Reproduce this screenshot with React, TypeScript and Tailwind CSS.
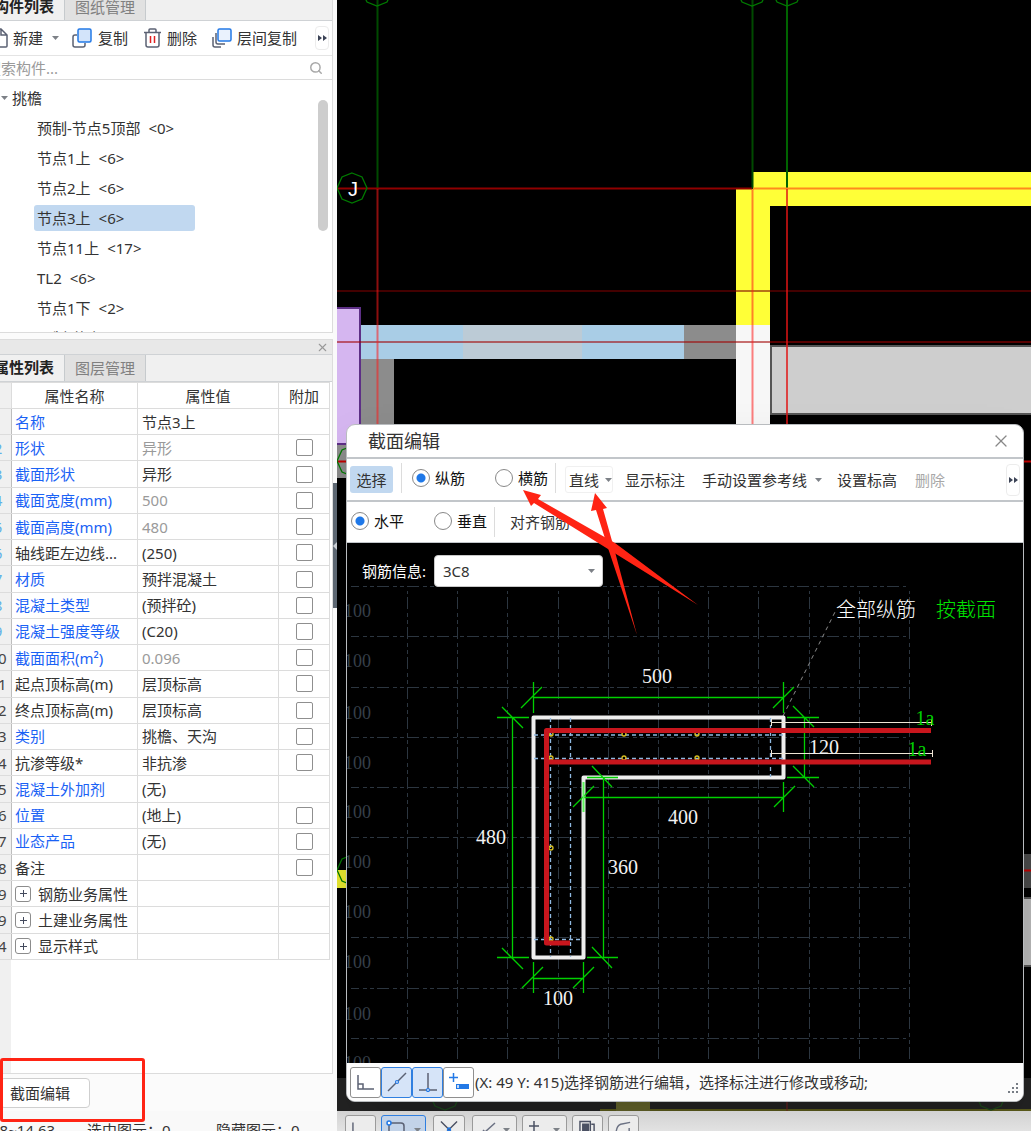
import React from 'react';
import { Search, X } from 'lucide-react';

type Property = {
  no: number;
  name: string;
  value?: string;
  blue?: boolean;
  muted?: boolean;
  check?: boolean;
  group?: boolean;
};

const treeItems = [
  { name: '预制-节点5顶部', count: '<0>' },
  { name: '节点1上', count: '<6>' },
  { name: '节点2上', count: '<6>' },
  { name: '节点3上', count: '<6>', selected: true },
  { name: '节点11上', count: '<17>' },
  { name: 'TL2', count: '<6>' },
  { name: '节点1下', count: '<2>' },
  { name: '预制-节点2下', count: '' },
];

const properties: Property[] = [
  { no: 1, name: '名称', value: '节点3上', blue: true },
  { no: 2, name: '形状', value: '异形', blue: true, muted: true, check: true },
  { no: 3, name: '截面形状', value: '异形', blue: true, check: true },
  { no: 4, name: '截面宽度(mm)', value: '500', blue: true, muted: true, check: true },
  { no: 5, name: '截面高度(mm)', value: '480', blue: true, muted: true, check: true },
  { no: 6, name: '轴线距左边线...', value: '(250)', check: true },
  { no: 7, name: '材质', value: '预拌混凝土', blue: true, check: true },
  { no: 8, name: '混凝土类型', value: '(预拌砼)', blue: true, check: true },
  { no: 9, name: '混凝土强度等级', value: '(C20)', blue: true, check: true },
  { no: 10, name: '截面面积(m²)', value: '0.096', blue: true, muted: true, check: true },
  { no: 11, name: '起点顶标高(m)', value: '层顶标高', check: true },
  { no: 12, name: '终点顶标高(m)', value: '层顶标高', check: true },
  { no: 13, name: '类别', value: '挑檐、天沟', blue: true, check: true },
  { no: 14, name: '抗渗等级*', value: '非抗渗', check: true },
  { no: 15, name: '混凝土外加剂', value: '(无)', blue: true },
  { no: 16, name: '位置', value: '(地上)', blue: true, check: true },
  { no: 17, name: '业态产品', value: '(无)', blue: true, check: true },
  { no: 18, name: '备注', check: true },
  { no: 19, name: '钢筋业务属性', group: true },
  { no: 29, name: '土建业务属性', group: true },
  { no: 34, name: '显示样式', group: true },
];

const Caret: React.FC<{ className?: string }> = ({ className = '' }) => (
  <svg width="7" height="4" viewBox="0 0 7 4" className={`shrink-0 fill-[#7d8187] ${className}`}>
    <path d="M0 0h7L3.5 4z" />
  </svg>
);

const MoreArrows = () => (
  <svg width="9" height="6" viewBox="0 0 9 6" className="shrink-0 fill-[#3c4356]">
    <path d="M0 0l4 3-4 3zM5 0l4 3-4 3z" />
  </svg>
);

const Tabs: React.FC<{ active: string; other: string; className: string }> = ({ active, other, className }) => (
  <div className={`flex items-end overflow-hidden border-b border-[#cfd2d5] bg-[#f0f0f0] ${className}`} role="tablist">
    <button role="tab" aria-selected="true" className="h-7 w-20 shrink-0 text-center font-bold text-[#222]">
      {active}
    </button>
    <button
      role="tab"
      aria-selected="false"
      className="h-7 w-[82px] shrink-0 border-x border-t border-[#c6cacd] bg-[#e1e1e1] text-center text-[#808080]"
    >
      {other}
    </button>
  </div>
);

const ComponentPanel = () => (
  <section className="flex h-[333px] shrink-0 flex-col border-r border-b border-[#dcdcdc] bg-white">
    <Tabs active="构件列表" other="图纸管理" className="h-[21px] shrink-0" />

    <div className="flex h-[35px] shrink-0 items-center border-b border-[#e4e4e4] pr-[3px] pl-2">
      <button className="flex items-center gap-[5px]">
        <svg width="16" height="20" viewBox="0 0 16 20" fill="none" stroke="#5b6173" strokeWidth="1.5">
          <path d="M2 1h7l6 6v11a1 1 0 0 1-1 1H2a1 1 0 0 1-1-1V2a1 1 0 0 1 1-1zM9 1v6h6" />
        </svg>
        新建
      </button>
      <Caret className="ml-[9px]" />
      <button className="ml-[13px] flex items-center gap-[6px]">
        <svg width="20" height="20" viewBox="0 0 20 20" fill="none" strokeWidth="1.5">
          <path d="M5 7H3a2 2 0 0 0-2 2v8a2 2 0 0 0 2 2h8a2 2 0 0 0 2-2v-2" stroke="#5b6173" />
          <rect x="6" y="1" width="13" height="13" rx="1.5" fill="#d3e4fa" stroke="#2379e6" />
        </svg>
        复制
      </button>
      <button className="ml-4 flex items-center gap-[6px]">
        <svg width="17" height="20" viewBox="0 0 17 20" fill="none" stroke="#5b6173" strokeWidth="1.5">
          <path d="M0 4.5h17M5 4V2a1 1 0 0 1 1-1h5a1 1 0 0 1 1 1v2M2 5v12a2 2 0 0 0 2 2h9a2 2 0 0 0 2-2V5" />
          <path d="M6.5 8v7M10.5 8v7" stroke="#e02020" />
        </svg>
        删除
      </button>
      <button className="ml-[15px] flex items-center gap-[5px]">
        <svg width="20" height="20" viewBox="0 0 20 20" fill="none" strokeWidth="1.5">
          <path d="M1 9v8a2 2 0 0 0 2 2h6M4 5v9a2 2 0 0 0 2 2h7" stroke="#5b6173" />
          <rect x="6" y="1" width="13" height="12" rx="1.5" fill="#eaf2fd" stroke="#2379e6" />
        </svg>
        层间复制
      </button>
      <button
        aria-label="更多"
        className="ml-auto flex h-6 w-[14px] items-center justify-center rounded border border-[#ececec]"
      >
        <MoreArrows />
      </button>
    </div>

    <label className="flex h-6 shrink-0 items-center border-b border-[#dcdcdc] pr-[9px] pl-[2px]">
      <input
        type="text"
        aria-label="搜索构件"
        placeholder="搜索构件..."
        className="min-w-0 flex-1 leading-5 outline-none placeholder:text-[#9a9a9a]"
      />
      <Search size={14} strokeWidth={2.5} className="text-[#a8a8a8]" />
    </label>

    <div className="flex min-h-0 flex-1 overflow-hidden pt-[3px]">
      <div className="min-w-0 flex-1 pl-4">
        <div className="flex h-[30px] items-center gap-1 pl-[1px]">
          <Caret />
          挑檐
        </div>
        <ul className="pl-[34px]">
          {treeItems.map((item) => (
            <li key={item.name} className="flex h-[30px] items-center">
              <button
                className={`flex h-[26px] w-[161px] items-center gap-2 rounded-[3px] pl-[3px] ${
                  item.selected ? 'bg-[#c1d8f0]' : ''
                }`}
              >
                <span>{item.name}</span>
                <span>{item.count}</span>
              </button>
            </li>
          ))}
        </ul>
      </div>
      <div className="mt-[17px] mr-1 h-[131px] w-[10px] rounded-full bg-[#cdcdcd]"></div>
    </div>
  </section>
);

const PropertyTable = () => (
  <table className="h-[578px] w-[346px] table-fixed border-collapse">
    <colgroup>
      <col className="w-[27px]" />
      <col className="w-[126px]" />
      <col className="w-[141px]" />
      <col />
    </colgroup>
    <thead>
      <tr className="h-[26px]">
        <th className="border border-[#dcdcdc] bg-[#f0f0f0]"></th>
        <th className="border border-[#dcdcdc] p-0 font-normal">属性名称</th>
        <th className="border border-[#dcdcdc] p-0 font-normal">属性值</th>
        <th className="border border-[#dcdcdc] p-0 font-normal">附加</th>
      </tr>
    </thead>
    <tbody>
      {properties.map((p) => (
        <tr key={p.no}>
          <td
            className={`border border-[#dcdcdc] border-r-[#bdbdbd] bg-[#f0f0f0] p-0 text-center ${
              p.no < 10 ? 'text-[#5fb0e8]' : 'text-[#444]'
            }`}
          >
            {p.no}
          </td>
          <td className={`border border-[#dcdcdc] py-0 pr-0 pl-[3px] whitespace-nowrap ${p.blue ? 'text-[#1a62f5]' : ''}`}>
            {p.group ? (
              <div className="flex items-center gap-[7px]">
                <button
                  aria-label={`展开${p.name}`}
                  className="flex size-4 items-center justify-center rounded-[3px] border border-[#8c8c8c]"
                >
                  <svg width="7" height="7" viewBox="0 0 7 7" stroke="#444b5e">
                    <path d="M0 3.5h7M3.5 0v7" />
                  </svg>
                </button>
                {p.name}
              </div>
            ) : (
              p.name
            )}
          </td>
          <td className={`border border-[#dcdcdc] py-0 pr-0 pl-1 ${p.muted ? 'text-[#9a9a9a]' : ''}`}>{p.value}</td>
          <td className="border border-[#dcdcdc] p-0">
            {p.check && (
              <input
                type="checkbox"
                aria-label={`附加 ${p.name}`}
                className="mx-auto block size-[17px] appearance-none rounded-[2px] border border-[#8f8f8f] bg-white"
              />
            )}
          </td>
        </tr>
      ))}
    </tbody>
  </table>
);

const PropertyPanel = () => (
  <section className="mt-[6px] flex min-h-0 flex-1 flex-col">
    <div className="flex min-h-0 flex-1 flex-col border-y border-r border-[#dcdcdc] bg-white">
      <div className="flex h-[14px] shrink-0 items-center justify-end bg-[#e8e8e8] pr-[3px]">
        <button aria-label="关闭">
          <X size={13} strokeWidth={2} className="text-[#999]" />
        </button>
      </div>
      <Tabs active="属性列表" other="图层管理" className="h-[28px] shrink-0 border-t" />
      <PropertyTable />
      <div className="w-[27px] flex-1 bg-[#f0f0f0]"></div>
    </div>
    <div className="flex h-[37px] shrink-0 items-center pl-4">
      <button className="h-[30px] w-[90px] rounded border border-[#cfcfcf] bg-white pr-[10px] text-center">
        截面编辑
      </button>
    </div>
  </section>
);

// axis bubble: a polygon round the axis name
const Bubble: React.FC<{ x: number; y: number; stroke?: string }> = ({ x, y, stroke = '#007a00' }) => (
  <path
    d={`M${x} ${y - 15}l10 4 5 11-5 11-10 4-10-4-5-11 5-11z`}
    fill="none"
    stroke={stroke}
    strokeWidth="1.3"
  />
);

const PlanDrawing = () => (
  <svg className="block h-full w-full">
    <g transform="translate(-337 0)">
      <rect x="753" y="172" width="1200" height="34" fill="#ffff37" />
      <rect x="736" y="189" width="34" height="137" fill="#ffff37" />
      <rect x="736" y="325" width="34" height="110" fill="#f7f7f7" />
      <rect x="771" y="346" width="1200" height="68" fill="#cecece" stroke="#555" strokeWidth="2" />
      <rect x="360" y="325" width="103" height="34" fill="#a9cde6" />
      <rect x="463" y="325" width="119" height="34" fill="#bccbd6" />
      <rect x="582" y="325" width="102" height="34" fill="#a9cde6" />
      <rect x="684" y="325" width="52" height="34" fill="#8c8c8c" />
      <rect x="360" y="359" width="34" height="119" fill="#8c8c8c" />
      <rect x="330" y="308" width="30" height="136" fill="#d5b6f0" stroke="#5d2f86" strokeWidth="2" />
      <rect x="330" y="445" width="64" height="33" fill="#8c8c8c" />
      <rect x="330" y="870" width="64" height="18" fill="#ecec30" />
      <rect x="1020" y="854" width="400" height="34" fill="#4a4a4a" />
      <rect x="1020" y="898" width="400" height="68" fill="#b9b9b9" stroke="#555" strokeWidth="2" />
      <rect x="330" y="1078" width="2000" height="60" fill="#232323" />
      <rect x="600" y="1109" width="2000" height="2" fill="#5c5c1c" />
      <rect x="616" y="1101" width="34" height="10" fill="#66662c" />

      <g strokeWidth="2" fill="none">
        <path d="M377.500 0V189M752.500 0V189" stroke="#004a00" />
        <path d="M787 0V189" stroke="#006400" />
        <path d="M337 188.500H752" stroke="#900000" />
        <path d="M753 188.500H2000" stroke="#ff8a1c" />
        <path d="M337 291H2000" stroke="#7a0000" strokeOpacity=".55" />
        <path d="M337 342H2000" stroke="#a00000" strokeOpacity=".55" />
        <path d="M377.500 189V440M752.500 189V440" stroke="#ff1a1a" strokeOpacity=".55" />
        <path d="M787 189V440" stroke="#e01414" strokeWidth="1.500" />
        <path d="M337 461.500H2000M1020 870.500H2000" stroke="#c00000" />
        <path d="M787 1101V1111" stroke="#7a2020" strokeWidth="1" />
      </g>

      <Bubble x={377} y={-9} />
      <Bubble x={752} y={-9} />
      <Bubble x={787} y={-9} />
      <Bubble x={352} y={188} />
      <Bubble x={352} y={461} />
      <Bubble x={352} y={870} />
      <Bubble x={445} y={1095} stroke="#1c4a1c" />
      <Bubble x={991} y={1095} stroke="#1c4a1c" />
      <text x="353" y="196" textAnchor="middle" fontSize="20" fill="#fff" className="font-['Liberation_Sans',sans-serif]">
        J
      </text>
    </g>
  </svg>
);

const gridX = [407, 457, 507, 558, 608, 658, 708, 758, 809, 859, 909];
const gridY = [586, 636, 687, 737, 787, 837, 887, 937, 988, 1038];
const scaleY = [617, 667, 719, 769, 818, 868, 918, 968, 1020, 1069];
const barDots = [
  [551, 734],
  [624, 734],
  [697, 734],
  [551, 758],
  [624, 758],
  [697, 758],
  [551, 848],
  [551, 939],
];

const SectionDrawing = () => (
  <svg className="absolute inset-0 h-full w-full">
    <g transform="translate(-347 -543)" fill="none">
      <g stroke="#2c3640" strokeDasharray="12 4 4 3 4 3" shapeRendering="crispEdges">
        {gridX.map((x) => (
          <path key={x} d={`M${x}.5 591V1059`} strokeDashoffset="24" />
        ))}
        {gridY.map((y) => (
          <path key={y} d={`M351 ${y}.5H906`} strokeDashoffset="4" />
        ))}
      </g>
      <g fill="#363f49" fontSize="18" textAnchor="end" className="font-['Liberation_Serif',serif]">
        {scaleY.map((y) => (
          <text key={y} x="371" y={y}>
            100
          </text>
        ))}
      </g>

      <path d="M783 716L835 612" stroke="#8a8a8a" strokeDasharray="4 4" />

      <path d="M533.500 717.500H783.500V777.500H583.500V957.500H533.500Z" stroke="#eeeeee" strokeWidth="4" strokeLinejoin="round" />
      <path
        d="M550.500 718V957M570.500 718V957M770.500 718V777M534 735H783M534 758.500H783M534 939.500H583"
        stroke="#8fb8e0"
        strokeWidth="1.300"
        strokeDasharray="4 3"
      />
      {barDots.map(([x, y]) => (
        <circle key={`${x}-${y}`} cx={x} cy={y} r="2" stroke="#d8c020" strokeWidth="1.300" />
      ))}

      <g stroke="#00d000" strokeWidth="1.300">
        <path d="M533 697.500H783M533.500 682V713M783.500 682V713M521 708L542 687M773 708L794 687" />
        <path d="M512.500 717V957M497 717.500H529M497 957.500H529M502 707L523 728M502 948L523 969" />
        <path d="M533 978.500H583M533.500 962V993M583.500 962V993M522 988L543 967M573 988L594 967" />
        <path d="M603.500 777V957M587 777.500H618M587 957.500H618M592 766L612 787M592 947L612 968" />
        <path d="M583 797.500H783M783.500 782V812M573 807L594 786M774 807L795 786" />
        <path d="M804.500 717V777M787 717.500H819M787 777.500H819M793 706L814 727M793 766L814 787" />
      </g>
      <path d="M583.500 782V812" stroke="#5cf55c" strokeWidth="2" />
      <path d="M771 722.500H932M771.500 719V726M931.500 719V726M771 753.500H933M771.500 750V757M932.500 750V757" stroke="#efe6d6" />

      <g fill="#f2f2f2" fontSize="20" textAnchor="middle" className="font-['Liberation_Serif',serif]">
        <text x="657" y="683">500</text>
        <text x="491" y="844">480</text>
        <text x="683" y="824">400</text>
        <text x="623" y="874">360</text>
        <text x="558" y="1005">100</text>
        <text x="824" y="754">120</text>
        <text x="925" y="725" fill="#00d000">1a</text>
        <text x="917" y="756" fill="#00d000">1a</text>
      </g>

      <g stroke="#c8161d" strokeWidth="5" strokeLinejoin="round">
        <path d="M931 730.500H546.500V943H570M546.500 762H931" />
      </g>

      <g fontSize="20" fontWeight="300">
        <text x="836" y="617" fill="#fff">全部纵筋</text>
        <text x="936" y="617" fill="#00e400">按截面</text>
      </g>
    </g>
  </svg>
);

const Radio: React.FC<{ name: string; label: string; checked?: boolean }> = ({ name, label, checked }) => (
  <label className="flex items-center gap-[5px] text-[#111]">
    <input
      type="radio"
      name={name}
      defaultChecked={checked}
      className="size-[18px] appearance-none rounded-full border border-[#888] bg-white bg-[radial-gradient(circle,#1f78e8_0_4px,transparent_5px)] bg-no-repeat not-checked:bg-none"
    />
    {label}
  </label>
);

const Divider = () => <div className="h-[30px] w-px shrink-0 bg-[#dcdcdc]"></div>;

const snapButton = 'flex size-[31px] shrink-0 items-center justify-center rounded-[3px] border';

const SectionDialog = () => (
  <section
    aria-label="截面编辑"
    className="absolute top-[424px] right-[7px] bottom-[9px] left-[9px] flex flex-col overflow-hidden rounded-[9px] border border-[#b9bcbf] bg-white shadow-2xl"
  >
    <header className="flex h-[34px] shrink-0 items-center justify-between border-b-2 border-[#c2c6ca] pr-[12px] pl-[21px]">
      <h2 className="text-[18px] leading-6">截面编辑</h2>
      <button aria-label="关闭">
        <X size={20} strokeWidth={1.5} className="text-[#888]" />
      </button>
    </header>

    <div className="flex h-[43px] shrink-0 items-center border-b-2 border-[#c2c6ca] pr-[3px] pl-[3px] whitespace-nowrap">
      <button className="h-[27px] w-[43px] rounded-[3px] bg-[#c1d8f0]">选择</button>
      <div className="flex items-center pr-[9px] pb-[3px] pl-2">
        <Divider />
        <div className="flex gap-[30px] pr-[7px] pl-[10px]">
          <Radio name="bar" label="纵筋" checked />
          <Radio name="bar" label="横筋" />
        </div>
        <Divider />
      </div>
      <button className="flex h-[27px] w-12 items-center gap-[6px] rounded-[3px] border border-[#f0f0f0] pl-[3px]">
        直线
        <Caret />
      </button>
      <button className="ml-[12px]">显示标注</button>
      <button className="ml-[17px] flex items-center gap-2">
        手动设置参考线
        <Caret />
      </button>
      <button className="ml-[15px]">设置标高</button>
      <button className="ml-[18px] text-[#a8a8a8]" disabled>
        删除
      </button>
      <button
        aria-label="更多"
        className="ml-auto flex h-8 w-[14px] items-center justify-center rounded border border-[#ececec]"
      >
        <MoreArrows />
      </button>
    </div>

    <div className="flex h-[41px] shrink-0 items-center border-b border-[#c2c6ca] pl-1">
      <div className="flex gap-[30px] pr-[7px] pb-[3px]">
        <Radio name="direction" label="水平" checked />
        <Radio name="direction" label="垂直" />
      </div>
      <Divider />
      <button className="ml-[15px]">对齐钢筋</button>
    </div>

    <div className="relative min-h-0 flex-1 overflow-hidden bg-black">
      <SectionDrawing />
      <label className="relative flex w-fit items-center gap-2 pt-3 pl-[15px] text-white">
        钢筋信息:
        <span className="relative flex items-center">
          <select className="h-8 w-[169px] appearance-none rounded border border-[#c8c8c8] bg-white pl-2 text-[#333]">
            <option>3C8</option>
          </select>
          <Caret className="pointer-events-none absolute right-2" />
        </span>
      </label>
    </div>

    <footer className="flex h-[38px] shrink-0 items-center bg-[#fcfcfc] pr-1 pl-[3px]">
      <button aria-label="正交" className={`${snapButton} border-[#8f8f8f] bg-white`}>
        <svg width="18" height="18" viewBox="0 0 18 18" fill="none" stroke="#5b6173" strokeWidth="1.5">
          <path d="M1 2v14h16M1 11h5v5" />
        </svg>
      </button>
      <button aria-label="中点" className={`${snapButton} border-[#2f7fe0] bg-[#d6e4f8]`}>
        <svg width="20" height="20" viewBox="0 0 20 20" fill="#d6e4f8" stroke="#5b6173" strokeWidth="1.5">
          <path d="M1 19L19 1" />
          <circle cx="10" cy="10" r="1.5" stroke="#2379e6" strokeWidth="1.2" />
        </svg>
      </button>
      <button aria-label="垂点" className={`${snapButton} border-[#2f7fe0] bg-[#d6e4f8]`}>
        <svg width="20" height="20" viewBox="0 0 20 20" fill="#d6e4f8" stroke="#5b6173" strokeWidth="1.5">
          <path d="M10 1v16M1 18h18" />
          <circle cx="10" cy="18" r="1.5" stroke="#2379e6" strokeWidth="1.2" />
        </svg>
      </button>
      <button aria-label="动态输入" className={`${snapButton} border-[#8f8f8f] bg-white`}>
        <svg width="20" height="18" viewBox="0 0 20 18" fill="none" stroke="#2379e6" strokeWidth="1.5">
          <path d="M4.5 0v9M0 4.5h9" />
          <path d="M7 13.5h13" strokeWidth="5" />
          <path d="M9 12v3" stroke="#fff" />
        </svg>
      </button>
      <p className="min-w-0 flex-1 truncate pl-px">(X: 49 Y: 415)选择钢筋进行编辑，选择标注进行修改或移动;</p>
      <svg width="11" height="11" viewBox="0 0 11 11" className="mt-3 fill-[#777d85]">
        <path d="M8 0h2v2H8zM4 4h2v2H4zM8 4h2v2H8zM0 8h2v2H0zM4 8h2v2H4zM8 8h2v2H8z" />
      </svg>
    </footer>
  </section>
);

const toolButton = 'flex h-8 shrink-0 items-start rounded-[3px] border border-[#9a9a9a] bg-[#ececec] px-[6px] pt-1';

const StatusBar = () => (
  <footer className="flex h-5 shrink-0 overflow-hidden bg-[#f9f9f9]">
    <div className="-ml-4 flex w-[353px] shrink-0 leading-[38px]">
      <span className="w-[103px] pl-[7px]">68~14.63</span>
      <span className="w-[129px]">选中图元：0</span>
      <span>隐藏图元：0</span>
    </div>
    <div className="flex flex-1 items-start gap-[5px] bg-linear-to-b from-[#d2d2d2] to-[#e2e2e2] pt-1 pl-2">
      <button aria-label="直角" className={`${toolButton} w-[31px]`}>
        <svg width="18" height="18" viewBox="0 0 18 18" fill="none" stroke="#5b6173" strokeWidth="1.5">
          <path d="M1 2v14h16" />
        </svg>
      </button>
      <button
        aria-label="矩形"
        className="mr-[2px] flex h-8 w-[45px] shrink-0 items-start justify-between rounded-[3px] border border-[#2f7fe0] bg-[#c3d3e8] px-1 pt-1"
      >
        <svg width="20" height="20" viewBox="0 0 20 20" fill="none" stroke="#5b6173" strokeWidth="1.5">
          <path d="M3 3h12a3 3 0 0 1 3 3v13M3 3v16" />
          <circle cx="3" cy="3" r="2" fill="#fff" stroke="#2379e6" />
        </svg>
        <Caret className="mt-2" />
      </button>
      <button aria-label="交点" className={`${toolButton} mr-[2px] w-8`}>
        <svg width="19" height="19" viewBox="0 0 19 19" fill="none" stroke="#4b5163" strokeWidth="1.5">
          <path d="M1 1l17 17M18 1L1 18" />
          <circle cx="9.5" cy="9.5" r="1.5" stroke="#2379e6" />
        </svg>
      </button>
      <button aria-label="延伸" className={`${toolButton} w-[45px] justify-between`}>
        <svg width="18" height="18" viewBox="0 0 18 18" fill="none" stroke="#6b7183" strokeWidth="1.5">
          <path d="M4 10l4 4M6 12L16 3" />
        </svg>
        <Caret className="mt-2" />
      </button>
      <button aria-label="偏移" className={`${toolButton} w-[45px] justify-between`}>
        <svg width="18" height="18" viewBox="0 0 18 18" fill="none" stroke="#4b5163" strokeWidth="1.5">
          <path d="M5 1v10M0 6h10" />
        </svg>
        <Caret className="mt-2" />
      </button>
      <button aria-label="复制图元" className={`${toolButton} w-[31px]`}>
        <svg width="18" height="18" viewBox="0 0 18 18" fill="none" stroke="#4b5163" strokeWidth="1.5">
          <path d="M1 16V1h11v15" />
          <path d="M4 4h6v12H4z" fill="#4b5163" />
          <path d="M13 4h3v12" />
        </svg>
      </button>
      <button aria-label="折线" className={`${toolButton} w-[31px]`}>
        <svg width="18" height="18" viewBox="0 0 18 18" fill="none" stroke="#6b7183" strokeWidth="1.5">
          <path d="M1 16C1 10 3 5 6 4L16 2M15 8v3" />
        </svg>
      </button>
    </div>
  </footer>
);

export default function App() {
  return (
    <div className="relative flex h-screen flex-col overflow-hidden bg-[#f5f5f5] font-['Noto_Sans','Noto_Sans_CJK_SC',sans-serif] text-[15px] leading-5 text-[#333]">
      <main className="flex min-h-0 flex-1">
        <aside className="-ml-4 flex w-[349px] shrink-0 flex-col bg-[#fbfbfb]">
          <ComponentPanel />
          <PropertyPanel />
        </aside>
        <div className="flex w-1 shrink-0 flex-col justify-center bg-[#fafafa] pb-5">
          <button aria-label="收起面板" className="flex h-[125px] items-center bg-[#5d6772]">
            <svg width="4" height="8" viewBox="0 0 4 8" fill="#c9ced4">
              <path d="M4 0v8L0 4z" />
            </svg>
          </button>
        </div>
        <div className="relative min-w-0 flex-1 overflow-hidden bg-black">
          <PlanDrawing />
          <SectionDialog />
        </div>
      </main>
      <StatusBar />

      {/* Red review marks drawn over the window */}
      <div className="pointer-events-none absolute bottom-[9px] left-0 h-[64px] w-[145px] rounded-[3px] border-3 border-[#ff2414]"></div>
      <svg className="pointer-events-none absolute inset-0 h-full w-full fill-[#ff2414]">
        <path d="M523 490L541 495 538 499 615 543 698 605 608 549 534 503 531 506z" />
        <path d="M595 493L607 508 603 509 614 548 637 635 608 548 596 510 591 511z" />
      </svg>
    </div>
  );
}
